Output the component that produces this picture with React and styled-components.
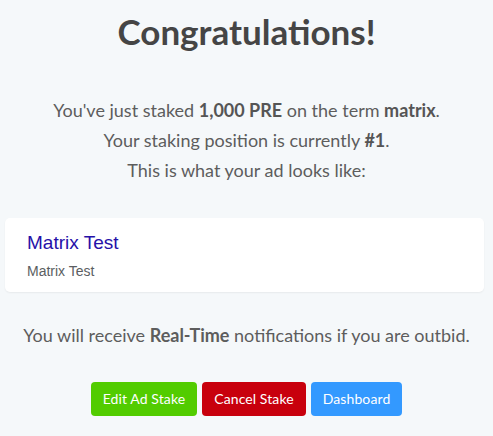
import React from "react";
import styled, { createGlobalStyle } from "styled-components";

const GlobalStyle = createGlobalStyle`
  html, body {
    margin: 0;
    padding: 0;
    background: #f5f8fa;
  }
  body {
    font-family: Lato, "Open Sans", sans-serif;
    color: #5a5a5a;
  }
`;

const Page = styled.div`
  display: flex;
  flex-direction: column;
  align-items: center;
  padding: 10px 5px 0;
`;

const Title = styled.h1`
  margin: 0;
  font-size: 35px;
  font-weight: 700;
  color: #454545;
  line-height: 42px;
`;

const Intro = styled.div`
  margin-top: 43px;
  text-align: center;
  font-size: 18px;
  line-height: 30px;
  color: #5d5d5d;

  p {
    margin: 0;
  }
  b {
    color: #555;
  }
`;

const AdCard = styled.div`
  align-self: stretch;
  margin: 33px 4px 0 0;
  background: #fff;
  border-radius: 5px;
  box-shadow: 0 1px 2px rgba(0, 0, 0, 0.06);
  padding: 14px 22px 12px;
  font-family: "Liberation Sans", Arial, sans-serif;
`;

const AdTitle = styled.div`
  font-size: 19px;
  line-height: 22px;
  color: #2610a8;
`;

const AdText = styled.div`
  margin-top: 8px;
  font-size: 14px;
  line-height: 18px;
  color: #5b5e62;
`;

const Notice = styled.p`
  margin: 31px 0 0;
  font-size: 18px;
  line-height: 24px;
  color: #5d5d5d;
`;

const Actions = styled.div`
  display: flex;
  gap: 5px;
  margin-top: 35px;
`;

const Button = styled.button`
  border: none;
  border-radius: 4px;
  height: 34px;
  padding: 0 12px 1px;
  font-family: Lato, "Open Sans", sans-serif;
  font-size: 14px;
  letter-spacing: 0.1px;
  color: #fff;
  background: ${(p) => p.bg};
  cursor: pointer;
`;

export default function App() {
  return (
    <>
      <GlobalStyle />
      <Page>
        <Title>Congratulations!</Title>
        <Intro>
          <p>
            You've just staked <b>1,000 PRE</b> on the term <b>matrix</b>.
          </p>
          <p>
            Your staking position is currently <b>#1</b>.
          </p>
          <p>This is what your ad looks like:</p>
        </Intro>
        <AdCard>
          <AdTitle>Matrix Test</AdTitle>
          <AdText>Matrix Test</AdText>
        </AdCard>
        <Notice>
          You will receive <b>Real-Time</b> notifications if you are outbid.
        </Notice>
        <Actions>
          <Button bg="#52cc00">Edit Ad Stake</Button>
          <Button bg="#c8000d">Cancel Stake</Button>
          <Button bg="#3399ff">Dashboard</Button>
        </Actions>
      </Page>
    </>
  );
}
